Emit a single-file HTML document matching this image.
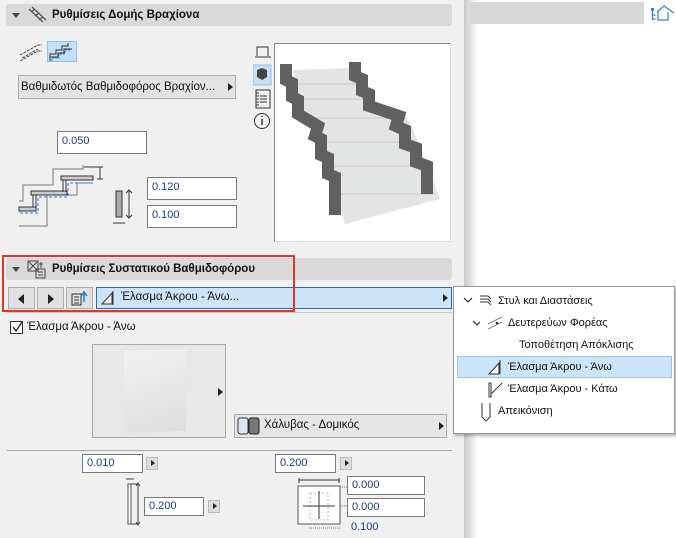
<!DOCTYPE html>
<html><head><meta charset="utf-8"><style>
*{box-sizing:border-box;margin:0;padding:0}
body{width:676px;height:538px;position:relative;overflow:hidden;background:#fff;font-family:"Liberation Sans","DejaVu Sans",sans-serif;font-size:11px;color:#111}
.a{position:absolute}
.panel{left:0;top:0;width:464px;height:538px;background:#f0f0f0}
.hdr{background:#d9d9d9;border-radius:3px;font-weight:bold;font-size:11.5px}
.inp{background:#fff;border:1px solid #7a7a7a;font-size:11px;padding-left:4px;line-height:19px;color:#1a3a7a}
.btn{background:#e1e1e1;border:1px solid #adadad}
.sb{background:#ddd;border:1px solid #bbb;width:12px;height:13px}
.tri{width:0;height:0;border-top:4px solid transparent;border-bottom:4px solid transparent;border-left:5px solid #222}
</style></head><body>
<div class="a panel"></div>
<div class="a" style="left:464px;top:0;width:14px;height:538px;background:linear-gradient(90deg,#c8c8c8,#fff)"></div>
<div class="a" style="left:470px;top:2px;width:174px;height:22px;background:#d8d8d8"></div>
<svg class="a" style="left:650px;top:4px" width="26" height="18"><rect x="1" y="4" width="3" height="3" fill="#2f7de1"/><path d="M2.5 7v9M2.5 11h3M2.5 15h3M7 8l7-6 10 7M8 8v8h10V8" stroke="#2f7de1" stroke-width="1.2" fill="none"/></svg>

<!-- header 1 -->
<div class="a hdr" style="left:6px;top:4px;width:446px;height:22px"></div>
<div class="a" style="left:12px;top:13px;border:4px solid transparent;border-top:5px solid #444;border-bottom:0"></div>
<svg class="a" style="left:27px;top:6px" width="20" height="18"><path d="M2 3l14 13M5 1l14 13M4 6l4-3M8 10l4-3M12 14l4-3" stroke="#555" stroke-width="1.3" fill="none"/></svg>
<div class="a" style="left:52px;top:9px;font-weight:bold;font-size:11.5px">Ρυθμίσεις Δομής Βραχίονα</div>

<div class="a" style="left:47px;top:41px;width:30px;height:21px;background:#c5dff5;border:1px solid #8ec0eb"></div>
<svg class="a" style="left:18px;top:41px" width="60" height="22"><path d="M2 14l18-10h4M2 20l18-10h4M4 17l16-9" stroke="#444" fill="none" stroke-dasharray="3 1"/><path d="M32 17v-4h6v-4h6v-4h6v-3M32 20v-4h8v-4h6v-4h8" stroke="#333" fill="none"/><path d="M34 20v-3h7v-4h6v-4h6" stroke="#2f7de1" fill="none" stroke-dasharray="2 1"/></svg>

<div class="a btn" style="left:18px;top:75px;width:218px;height:24px;background:#e3e3e3"></div>
<div class="a" style="left:21px;top:81px;font-size:11.5px">Βαθμιδωτός Βαθμιδοφόρος Βραχίον...</div>
<div class="a tri" style="left:228px;top:83px"></div>

<div class="a inp" style="left:57px;top:131px;width:90px;height:23px">0.050</div>
<div class="a inp" style="left:147px;top:177px;width:90px;height:23px">0.120</div>
<div class="a inp" style="left:147px;top:205px;width:90px;height:23px">0.100</div>
<svg class="a" style="left:0;top:0" width="140" height="240"><path d="M83 165v4H53v16H23v16h-4" stroke="#777" fill="none"/><path d="M93 183H77v12H47v31H19" stroke="#777" fill="none"/><rect x="61" y="176" width="32" height="4" fill="#ccc" stroke="#333"/><rect x="31" y="191" width="36" height="4" fill="#ccc" stroke="#333"/><rect x="19" y="207" width="17" height="4" fill="#ccc" stroke="#333"/><path d="M63 180v12M66 180v12M33 195v12M36 195v12" stroke="#333"/><path d="M93 183H68v14H38v16H19" stroke="#2f7de1" fill="none" stroke-dasharray="3 2"/><path d="M100 167v12M97 167h6M97 179h6M84 167h13" stroke="#333" fill="none"/></svg>
<svg class="a" style="left:112px;top:189px" width="24" height="38"><rect x="4" y="2" width="6" height="26" fill="#aaa" stroke="#333"/><path d="M17 2v26M14 4l3-3 3 3M14 26l3 3 3-3M1 34h12" stroke="#333" fill="none"/></svg>

<svg class="a" style="left:253px;top:44px" width="20" height="88"><path d="M4 12V3h11v9M2 13h16" stroke="#333" fill="none"/><rect x="0" y="21" width="18" height="20" fill="#c5dff5" stroke="#8ec0eb"/><path d="M4 26l5-2 5 2v7l-5 3-5-3z" fill="#444"/><path d="M3 46h14v18H3zM7 52h7M7 55h7M7 58h7M3 49h3M3 52h3M3 55h3M3 58h3M3 61h3" stroke="#333" fill="none"/><circle cx="9" cy="77" r="7.5" stroke="#333" fill="none"/><path d="M9 75v6M9 72v1" stroke="#333" stroke-width="1.5"/></svg>

<div class="a" style="left:274px;top:43px;width:177px;height:199px;background:#fff;border:1px solid #888;border-color:#888 #ddd #ddd #888"></div>
<svg class="a" style="left:275px;top:44px" width="176" height="197"><polygon points="18,26 80,24 98,55 135,78 165,155 70,180 48,110 28,70" fill="#e3e4e4"/><g stroke="#d2d2d2" stroke-width="1.5"><path d="M22 40h64M26 55h70M32 74h100M44 98h94M50 122h100M56 150h104"/></g><path d="M11 20v16l6 3v14l6 3v14l20 12l-3 10l6 3v16l7 3v16l7 3v38" stroke="#606060" stroke-width="12" fill="none"/><path d="M80 18v14l7 3v12l7 3v12l30 10l-3 10l9 4v14l11 4v14l11 4v28" stroke="#606060" stroke-width="12" fill="none"/></svg>

<!-- header 2 -->
<div class="a hdr" style="left:6px;top:258px;width:446px;height:22px"></div>
<div class="a" style="left:12px;top:267px;border:4px solid transparent;border-top:5px solid #444;border-bottom:0"></div>
<svg class="a" style="left:27px;top:260px" width="20" height="19"><rect x="1" y="1" width="10" height="10" fill="none" stroke="#444"/><path d="M2 2l8 8M10 2l-8 8M9 9h9v9H9zM11 12h5M11 15h5M14 2v6M12 4h4" stroke="#444" fill="none"/></svg>
<div class="a" style="left:52px;top:263px;font-weight:bold;font-size:11.5px">Ρυθμίσεις Συστατικού Βαθμιδοφόρου</div>

<div class="a btn" style="left:8px;top:287px;width:27px;height:22px"></div>
<div class="a" style="left:18px;top:294px;border-top:5px solid transparent;border-bottom:5px solid transparent;border-right:6px solid #222"></div>
<div class="a btn" style="left:37px;top:287px;width:27px;height:22px"></div>
<div class="a" style="left:48px;top:294px;border-top:5px solid transparent;border-bottom:5px solid transparent;border-left:6px solid #222"></div>
<div class="a btn" style="left:66px;top:287px;width:27px;height:22px"></div>
<svg class="a" style="left:70px;top:289px" width="20" height="18"><path d="M2 5h9v11H2zM4 8h5M4 11h5M4 14h5" stroke="#333" fill="none"/><path d="M14 13V4M11 7l3-4 3 4" stroke="#2f7de1" stroke-width="1.6" fill="none"/></svg>
<div class="a" style="left:96px;top:287px;width:356px;height:22px;background:#cce4f7;border:1px solid #2a6bb5"></div>
<svg class="a" style="left:100px;top:289px" width="18" height="18"><path d="M2 15L12 4v11zM13 2v14" stroke="#333" fill="#f4f4f4"/></svg>
<div class="a" style="left:121px;top:291px;font-size:11.5px">Έλασμα Άκρου - Άνω...</div>
<div class="a tri" style="left:443px;top:294px"></div>
<div class="a" style="left:2px;top:255px;width:293px;height:57px;border:2px solid #e0352b"></div>
<div class="a" style="left:7px;top:312px;width:445px;height:1px;background:#c8c8c8"></div>

<div class="a" style="left:10px;top:321px;width:13px;height:13px;background:#fff;border:1px solid #333"></div>
<svg class="a" style="left:11px;top:321px" width="12" height="12"><path d="M2 6l3 4 6-9" stroke="#222" stroke-width="1.3" fill="none"/></svg>
<div class="a" style="left:27px;top:321px;font-size:11.5px">Έλασμα Άκρου - Άνω</div>

<div class="a" style="left:92px;top:344px;width:134px;height:94px;background:#e8e8e8;border:1px solid #aaa"></div>
<div class="a" style="left:124px;top:350px;width:62px;height:82px;background:linear-gradient(160deg,#f2f2f2,#dedede);transform:skewY(-2deg)"></div>
<div class="a tri" style="left:218px;top:388px"></div>
<div class="a" style="left:234px;top:414px;width:213px;height:24px;background:#e6e6e6;border:1px solid #aaa"></div>
<svg class="a" style="left:237px;top:417px" width="26" height="18"><rect x="1" y="1" width="10" height="16" rx="2" fill="#dbe8f8" stroke="#333"/><rect x="12" y="1" width="10" height="16" rx="2" fill="#777" stroke="#222"/></svg>
<div class="a" style="left:264px;top:419px;font-size:11.5px">Χάλυβας - Δομικός</div>
<div class="a tri" style="left:439px;top:422px"></div>

<div class="a" style="left:7px;top:450px;width:445px;height:1px;background:#aaa"></div>
<div class="a inp" style="left:82px;top:454px;width:61px;height:19px;line-height:17px">0.010</div>
<div class="a sb" style="left:146px;top:457px"></div><div class="a tri" style="left:151px;top:460px;border-width:3px 0 3px 4px"></div>
<div class="a inp" style="left:275px;top:454px;width:61px;height:19px;line-height:17px">0.200</div>
<div class="a sb" style="left:340px;top:457px"></div><div class="a tri" style="left:345px;top:460px;border-width:3px 0 3px 4px"></div>
<svg class="a" style="left:124px;top:476px" width="20" height="52"><rect x="4" y="8" width="3" height="40" fill="#fff" stroke="#555"/><path d="M14 8v40M12 10l2-3 2 3M12 46l2 3 2-3M2 3h8M7 8h6M7 48h6" stroke="#444" fill="none"/></svg>
<div class="a inp" style="left:144px;top:497px;width:60px;height:19px;line-height:17px">0.200</div>
<div class="a sb" style="left:208px;top:500px"></div><div class="a tri" style="left:213px;top:503px;border-width:3px 0 3px 4px"></div>
<svg class="a" style="left:295px;top:476px" width="56" height="56"><path d="M4 4h40M4 2v5M44 2v5" stroke="#333"/><rect x="3" y="10" width="42" height="38" fill="#fff" stroke="#555"/><rect x="15" y="17" width="18" height="27" fill="none" stroke="#bbb" stroke-dasharray="2 2"/><path d="M24 15v28M8 30h32" stroke="#333"/><path d="M14 52h12M45 11h8M45 30h8M26 52h20" stroke="#777" stroke-dasharray="1 1"/></svg>
<div class="a inp" style="left:347px;top:476px;width:78px;height:19px;line-height:17px">0.000</div>
<div class="a inp" style="left:347px;top:498px;width:78px;height:19px;line-height:17px">0.000</div>
<div class="a" style="left:351px;top:521px;color:#1a3a7a">0.100</div>

<!-- popup -->
<div class="a" style="left:453px;top:286px;width:222px;height:148px;background:#fff;border:1px solid #999;box-shadow:2px 2px 3px rgba(0,0,0,.3)"></div>
<div class="a" style="left:457px;top:356px;width:215px;height:22px;background:#cce4f7;border:1px solid #99c8ef"></div>
<svg class="a" style="left:462px;top:294px" width="18" height="40"><path d="M2 4l4 4 4-4M11 27l4 4 4-4" stroke="#444" fill="none" stroke-width="1.3"/></svg>
<svg class="a" style="left:478px;top:293px" width="16" height="14"><path d="M2 3h8l3 3M2 6h8l3 3M2 9h8l3 3" stroke="#333" fill="none"/></svg>
<div class="a" style="left:498px;top:295px">Στυλ και Διαστάσεις</div>
<svg class="a" style="left:486px;top:316px" width="20" height="14"><path d="M2 8l14-7M2 13l14-7" stroke="#888"/><circle cx="11" cy="7" r="1.3" fill="#333"/></svg>
<div class="a" style="left:508px;top:317px">Δευτερεύων Φορέας</div>
<div class="a" style="left:519px;top:339px">Τοποθέτηση Απόκλισης</div>
<svg class="a" style="left:487px;top:358px" width="18" height="18"><path d="M2 16L12 5v11zM13 2v14" stroke="#333" fill="#f4f4f4"/></svg>
<div class="a" style="left:508px;top:361px">Έλασμα Άκρου - Άνω</div>
<svg class="a" style="left:487px;top:380px" width="18" height="18"><path d="M2 3v14h2V3zM4 14L15 3" stroke="#333" fill="none"/></svg>
<div class="a" style="left:508px;top:383px">Έλασμα Άκρου - Κάτω</div>
<svg class="a" style="left:480px;top:402px" width="12" height="20"><path d="M2 1v14l4 4 4-4V1" stroke="#333" fill="none"/></svg>
<div class="a" style="left:498px;top:405px">Απεικόνιση</div>
</body></html>
